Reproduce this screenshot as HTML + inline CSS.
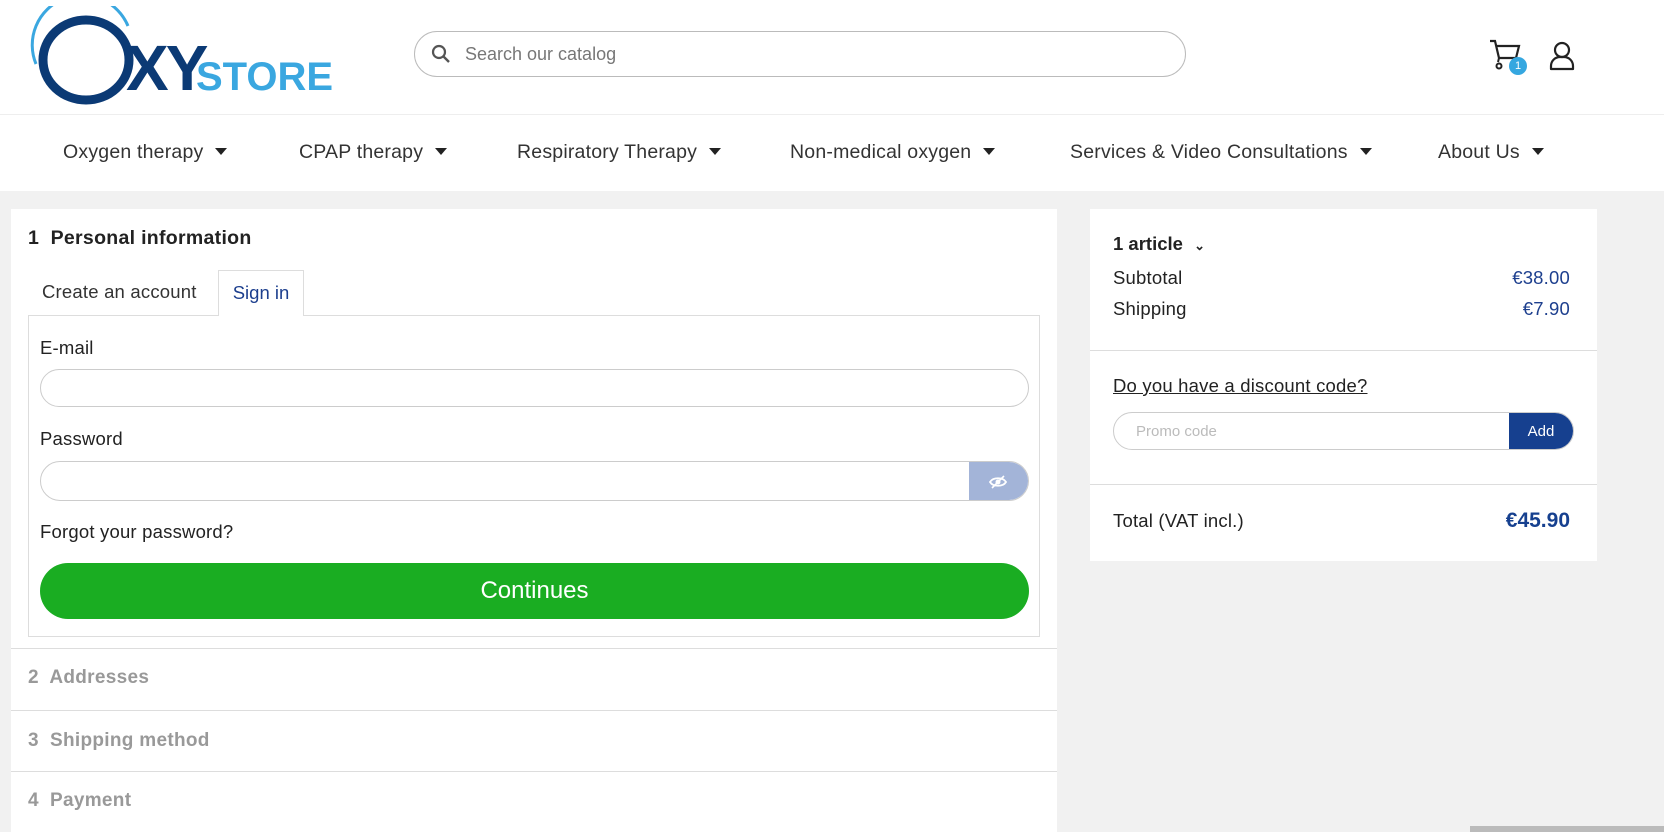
<!DOCTYPE html>
<html><head><meta charset="utf-8"><style>
*{box-sizing:border-box;margin:0;padding:0}
body{width:1664px;height:832px;overflow:hidden;background:#f1f1f1;font-family:"Liberation Sans",sans-serif;color:#222;position:relative}
.a{position:absolute}
.hdr{left:0;top:0;width:1664px;height:115px;background:#fff;border-bottom:1px solid #eee}
.nav{left:0;top:115px;width:1664px;height:76px;background:#fff}
.nav span{position:absolute;top:26px;font-size:19.5px;color:#333;letter-spacing:0.2px}
.nav span:after{content:"";display:inline-block;margin-left:12px;vertical-align:3px;border-left:6px solid transparent;border-right:6px solid transparent;border-top:7px solid #222}
.inp{border:1px solid #ccc;border-radius:20px;background:#fff}
.lbl{font-size:18.5px;color:#222;letter-spacing:0.2px}
.gray{font-size:19px;font-weight:bold;color:#999;letter-spacing:0.3px}
.line{height:1px;background:#ddd}
</style></head><body>
<div class="a hdr">
 <svg class="a" style="left:28px;top:6px" width="320" height="100" viewBox="0 0 320 100">
  <path d="M8 58 A48 48 0 0 1 100 20" fill="none" stroke="#3aa7e0" stroke-width="3"/>
  <ellipse cx="58" cy="54" rx="43" ry="40" fill="none" stroke="#0b3a75" stroke-width="9"/>
  <text x="98" y="84" font-family="Liberation Sans" font-weight="bold" font-size="64" fill="#0b3a75" letter-spacing="-3">XY</text>
  <text x="168" y="84" font-family="Liberation Sans" font-weight="bold" font-size="40" fill="#3aa7e0">STORE</text>
 </svg>
 <div class="a inp" style="left:414px;top:31px;width:772px;height:46px;border-radius:23px;border-color:#bbb">
  <svg class="a" style="left:16px;top:12px" width="20" height="20" viewBox="0 0 20 20"><circle cx="8" cy="8" r="6" fill="none" stroke="#555" stroke-width="2.2"/><path d="M12.5 12.5L18 18" stroke="#555" stroke-width="2.4"/></svg>
  <span class="a" style="left:50px;top:12px;font-size:18px;color:#777">Search our catalog</span>
 </div>
 <svg class="a" style="left:1488px;top:38px" width="36" height="36" viewBox="0 0 36 36"><path d="M2 3h5l4 17h17l3-12H9" fill="none" stroke="#222" stroke-width="2.2"/><path d="M11 20L10 24" stroke="#222" stroke-width="2"/><circle cx="11" cy="28" r="2.5" fill="none" stroke="#222" stroke-width="2"/></svg>
 <div class="a" style="left:1509px;top:57px;width:18px;height:18px;border-radius:9px;background:#35a7e0;color:#fff;font-size:11px;text-align:center;line-height:18px">1</div>
 <svg class="a" style="left:1546px;top:40px" width="32" height="32" viewBox="0 0 32 32"><circle cx="16" cy="10" r="7" fill="none" stroke="#222" stroke-width="2.2"/><path d="M5 29v-3c0-5 4-9 9-9h4c5 0 9 4 9 9v3z" fill="none" stroke="#222" stroke-width="2.2" stroke-linejoin="round"/></svg>
</div>
<div class="a nav">
 <span style="left:63px">Oxygen therapy</span><span style="left:299px">CPAP therapy</span><span style="left:517px">Respiratory Therapy</span><span style="left:790px">Non-medical oxygen</span><span style="left:1070px">Services &amp; Video Consultations</span><span style="left:1438px">About Us</span>
</div>
<div class="a" style="left:11px;top:209px;width:1046px;height:623px;background:#fff">
 <div class="a" style="left:17px;top:18px;font-size:19.5px;font-weight:bold;letter-spacing:0.3px">1&nbsp; Personal information</div>
 <div class="a" style="left:31px;top:72px;font-size:18.5px;color:#333;letter-spacing:0.2px">Create an account</div>
 <div class="a" style="left:207px;top:61px;width:86px;height:46px;border:1px solid #ddd;border-bottom:none;background:#fff;z-index:2;font-size:18.5px;color:#1d3f8e;text-align:center;line-height:44px">Sign in</div>
 <div class="a" style="left:17px;top:106px;width:1012px;height:322px;border:1px solid #ddd">
  <div class="a lbl" style="left:11px;top:21px">E-mail</div>
  <div class="a inp" style="left:11px;top:53px;width:989px;height:38px"></div>
  <div class="a lbl" style="left:11px;top:112px">Password</div>
  <div class="a inp" style="left:11px;top:145px;width:989px;height:40px;overflow:hidden">
   <div class="a" style="right:0;top:0;width:59px;height:40px;background:#a3b4d8"><svg class="a" style="left:20px;top:13px" width="18" height="14" viewBox="0 0 18 14"><path d="M1 7C4 2 14 2 17 7C14 12 4 12 1 7Z" fill="none" stroke="#fff" stroke-width="1.8"/><circle cx="9" cy="7" r="2.5" fill="#fff"/><path d="M3 13L15 1" stroke="#fff" stroke-width="1.6"/></svg></div>
  </div>
  <div class="a lbl" style="left:11px;top:205px">Forgot your password?</div>
  <div class="a" style="left:11px;top:247px;width:989px;height:56px;border-radius:28px;background:#1aad22;color:#fff;font-size:24px;text-align:center;line-height:56px">Continues</div>
 </div>
 <div class="a line" style="left:0;top:439px;width:1046px"></div>
 <div class="a gray" style="left:17px;top:458px">2&nbsp; Addresses</div>
 <div class="a line" style="left:0;top:501px;width:1046px"></div>
 <div class="a gray" style="left:17px;top:521px">3&nbsp; Shipping method</div>
 <div class="a line" style="left:0;top:562px;width:1046px"></div>
 <div class="a gray" style="left:17px;top:581px">4&nbsp; Payment</div>
</div>
<div class="a" style="left:1090px;top:209px;width:507px;height:352px;background:#fff">
 <div class="a" style="left:23px;top:24px;font-size:18.5px;font-weight:bold">1 article <span style="font-size:13px;margin-left:6px">&#8964;</span></div>
 <div class="a lbl" style="left:23px;top:58px">Subtotal</div><div class="a lbl" style="right:27px;top:58px;color:#1d3f8e">€38.00</div>
 <div class="a lbl" style="left:23px;top:89px">Shipping</div><div class="a lbl" style="right:27px;top:89px;color:#1d3f8e">€7.90</div>
 <div class="a line" style="left:0;top:141px;width:507px"></div>
 <div class="a lbl" style="left:23px;top:166px;text-decoration:underline">Do you have a discount code?</div>
 <div class="a inp" style="left:23px;top:203px;width:461px;height:38px;border-radius:19px;overflow:hidden">
  <span class="a" style="left:22px;top:10px;font-size:15px;color:#bbb">Promo code</span>
  <div class="a" style="right:0;top:0;width:64px;height:38px;background:#16408f;color:#fff;font-size:15px;text-align:center;line-height:38px">Add</div>
 </div>
 <div class="a line" style="left:0;top:275px;width:507px"></div>
 <div class="a lbl" style="left:23px;top:301px">Total (VAT incl.)</div>
 <div class="a" style="right:27px;top:300px;font-size:21px;font-weight:bold;color:#16408f">€45.90</div>
</div>
<div class="a" style="left:1470px;top:826px;width:194px;height:6px;background:#bbb"></div>
</body></html>
